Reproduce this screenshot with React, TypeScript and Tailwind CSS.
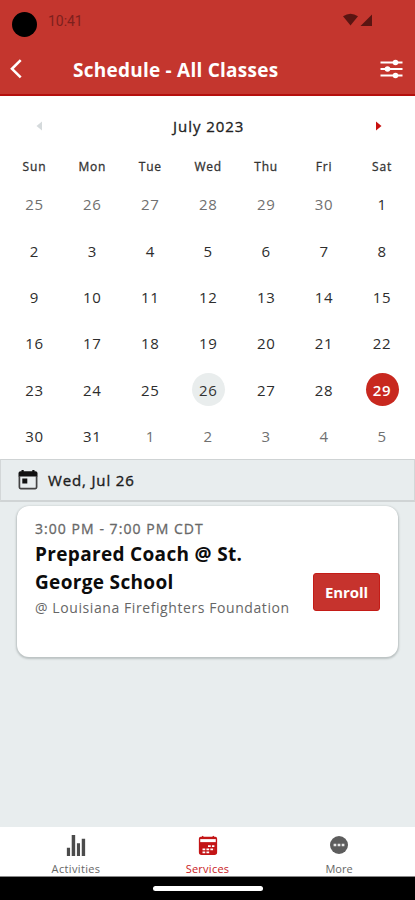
import React from "react";

const days = ["Sun", "Mon", "Tue", "Wed", "Thu", "Fri", "Sat"];

const dates: number[] = [
  25, 26, 27, 28, 29, 30,
  ...Array.from({ length: 31 }, (_, i) => i + 1),
  1, 2, 3, 4, 5,
];

function StatusBar() {
  return (
    <div className="flex h-[42px] items-start pl-3">
      <div className="mt-[12px] size-[25px] rounded-full bg-black" />
      <span className="ml-[11px] mt-[11px] font-[Roboto] text-[14px] leading-[20px] tracking-[-0.05px] text-[#7d201d]">10:41</span>
      <svg className="ml-auto mr-[42px] mt-[13px]" width="30" height="14" viewBox="0 0 30 14" fill="#5a1512">
        <path d="M0 3.2Q7.5-1.8 15 3.2L7.5 12.6Z" />
        <path d="M17.5 13H29V1.4Z" />
      </svg>
    </div>
  );
}

function Header() {
  return (
    <header className="h-[96px] shrink-0 border-b-2 border-[#b50f0d] bg-[#c4362e]">
      <StatusBar />
      <div className="flex h-[54px] items-center pl-[9px] pr-[12px] text-white">
        <svg width="14" height="20" viewBox="0 0 14 20" fill="none" stroke="currentColor" strokeWidth="2.6">
          <path d="M11.7 1.2 3 9.800l8.700 8.600" />
        </svg>
        <h1 className="ml-[50px] mt-[1px] whitespace-nowrap text-[19px] font-bold leading-[26px] tracking-[0.24px]">Schedule - All Classes</h1>
        <svg className="ml-auto" width="23" height="20" viewBox="0 0 23 20" fill="currentColor" stroke="currentColor">
          <path d="M.5 3.500h22M.5 10h22M.5 16.500h22" strokeWidth="1.9" />
          <g stroke="none">
            <circle cx="15.5" cy="3.5" r="2.8" />
            <circle cx="7.5" cy="10" r="2.8" />
            <circle cx="15.5" cy="16.5" r="2.8" />
          </g>
        </svg>
      </div>
    </header>
  );
}

function Calendar() {
  return (
    <section className="h-[363px] shrink-0 bg-white pl-[5.5px] pr-[4px]">
      <div className="flex h-[59px] items-center justify-between pl-[30px] pr-[29px]">
        <svg width="6" height="10" viewBox="0 0 6 10" fill="#d5dadc"><path d="M6 .5v9L.5 5Z" /></svg>
        <span className="text-[15px] leading-[20px] tracking-[0.95px] text-[#222] [-webkit-text-stroke:0.3px]">July 2023</span>
        <svg width="6" height="10" viewBox="0 0 6 10" fill="#c8100f"><path d="M0 .5v9L5.500 5Z" /></svg>
      </div>
      <div className="grid h-[26px] grid-cols-7">
        {days.map((d) => (
          <span key={d} className="text-center text-[12px] leading-[23px] tracking-[0.8px] text-[#333] [-webkit-text-stroke:0.3px]">{d}</span>
        ))}
      </div>
      <div className="grid auto-rows-[46.4px] grid-cols-7">
        {dates.map((n, i) => {
          const outside = i < 6 || i > 36;
          const color = i === 34 ? "bg-[#c8281f] font-semibold text-white" : i === 31 ? "bg-[#e9eded] text-[#333]" : outside ? "text-[#707070]" : "text-[#2d2d2d]";
          return (
            <div key={i} className="flex items-center justify-center">
              <span className={`flex size-[33px] items-center justify-center rounded-full text-[15px] leading-[20px] tracking-[0.7px] ${color}`}>{n}</span>
            </div>
          );
        })}
      </div>
    </section>
  );
}

function Agenda() {
  return (
    <main className="flex-1 bg-[#e8edee]">
      <div className="flex h-[43px] items-center border-x border-b-2 border-t border-b-[#d0d4d5] border-l-[#d3d7d8] border-r-[#d3d7d8] border-t-[#cfd3d4] pl-[17px]">
        <svg width="20" height="20" viewBox="0 0 20 20">
          <path d="M2.500 1.200h1V0h2.200v1.200h8.600V0h2.200v1.200h1A2 2 0 0 1 19.500 3v3.500H.5V3a2 2 0 0 1 2-1.800Z" fill="#111" />
          <path d="M1.400 6v11.300a1.300 1.300 0 0 0 1.300 1.300h14.600a1.300 1.300 0 0 0 1.300-1.300V6" fill="none" stroke="#444" strokeWidth="1.700" />
          <path d="M4.300 8.500h5v5h-5Z" fill="#111" />
        </svg>
        <span className="ml-[10px] text-[15px] leading-[20px] tracking-[0.85px] text-[#1c1c1c] [-webkit-text-stroke:0.35px]">Wed, Jul 26</span>
      </div>
      <article className="mx-[17px] mt-[4px] flex h-[151px] rounded-[12px] bg-white pl-[18px] pr-[18px] shadow-[0_1px_2px_1px_rgba(120,130,130,0.4)]">
        <div className="w-[260px] pt-[13px]">
          <p className="whitespace-nowrap text-[14px] leading-[20px] tracking-[1.05px] text-[#686868] [-webkit-text-stroke:0.3px]">3:00 PM - 7:00 PM CDT</p>
          <h2 className="mt-px text-[19px] font-bold leading-[28px] tracking-[0.33px] text-[#0c0c0c]">Prepared Coach @ St.<br />George School</h2>
          <p className="mt-[2px] whitespace-nowrap text-[14px] leading-[20px] tracking-[0.58px] text-[#666]">@ Louisiana Firefighters Foundation</p>
        </div>
        <button className="ml-auto mt-[67px] h-[38px] w-[67px] shrink-0 rounded-[3px] border border-[#c41c17] bg-[#c6332d] text-[15px] font-bold leading-[20px] tracking-[-0.1px] text-white">Enroll</button>
      </article>
    </main>
  );
}

function BottomNav() {
  return (
    <footer className="h-[73px] shrink-0 bg-black">
      <nav className="flex h-[50px] justify-center overflow-hidden border-b border-[#888] bg-white text-[11px] leading-[14px] text-[#666]">
        <div className="flex w-[131.5px] flex-col items-center pt-[8px]">
          <svg width="20" height="23" viewBox="0 0 20 23" fill="#4b4b4b"><path d="M0 14h3.500v9H0ZM5.300 0h3.800v23H5.300ZM11 9h3.400v14H11ZM16.300 4H20v19h-3.700Z" /></svg>
          <span className="mt-[6px] tracking-[0.35px]">Activities</span>
        </div>
        <div className="flex w-[131.5px] flex-col items-center pt-[8px] text-[#c9211e]">
          <svg width="22" height="23" viewBox="0 0 22 23">
            <path d="M3 2h1L5 .8 6.500 2h9L17 .8 18 2h1a2 2 0 0 1 2 2v15a3 3 0 0 1-3 3H4a3 3 0 0 1-3-3V4a2 2 0 0 1 2-2Z" fill="#c31516" />
            <path d="M2.500 4.500h17v3.300h-17Z" fill="#fff" />
            <path d="M11 12.200h7M5 15.700h13M5 19h8.500" stroke="#fff" strokeWidth="1.900" strokeDasharray="3 1.300" />
          </svg>
          <span className="mt-[6px] tracking-[0.25px]">Services</span>
        </div>
        <div className="flex w-[131.5px] flex-col items-center pt-[9px]">
          <svg width="20" height="20" viewBox="0 0 20 20"><circle cx="10" cy="10" r="10" fill="#5d5d5d" /><path d="M4 8.500h3v3H4Zm4.500 0h3v3h-3Zm4.500 0h3v3h-3Z" fill="#e9e9e9" /></svg>
          <span className="mt-[8px]">More</span>
        </div>
      </nav>
      <div className="mx-auto mt-[9px] h-[5px] w-[110px] rounded-full bg-white" />
    </footer>
  );
}

export default function App() {
  return (
    <div className="flex h-[900px] w-[415px] flex-col overflow-hidden bg-white font-['Open_Sans','Noto_Sans',sans-serif]">
      <Header />
      <Calendar />
      <Agenda />
      <BottomNav />
    </div>
  );
}
